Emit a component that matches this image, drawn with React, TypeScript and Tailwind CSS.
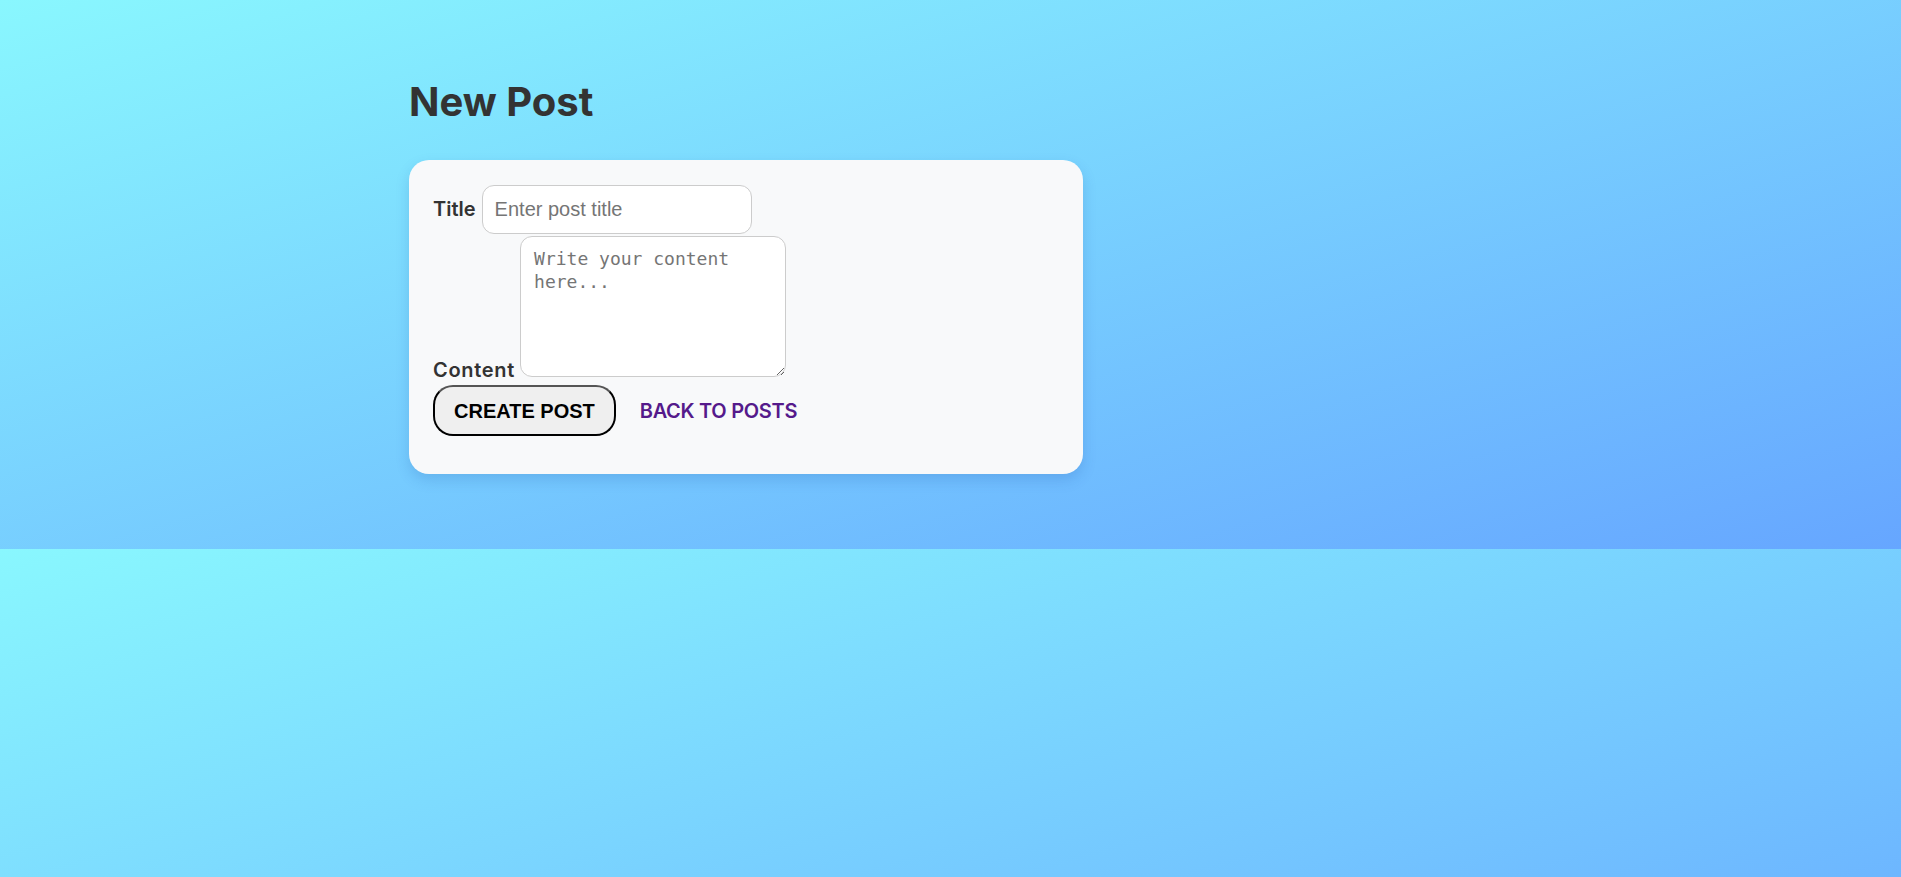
const NewPost = () => {
  return (
    <div className="flex min-h-screen w-full">
      <main className="flex-1 bg-[linear-gradient(to_bottom_right,#89f7fe_0%,#66a6ff_100%)] bg-[length:100%_549px] bg-repeat-y">
        <div className="pl-[409px] pt-[78px]">
          <h1 className="font-['Inter',sans-serif] text-[40px] leading-[48px] font-bold text-[#333]">
            New Post
          </h1>

          <form className="mt-[34px] w-[674px] rounded-[20px] bg-[#f8f9fa] px-6 pt-[25px] pb-[38px] shadow-[0_6px_14px_rgba(30,80,160,0.18)]">
            <div className="flex items-baseline gap-[6px]">
              <label className="font-['Inter',sans-serif] text-[20px] font-semibold text-[#333]">Title</label>
              <input
                type="text"
                placeholder="Enter post title"
                className="h-[49px] w-[270px] rounded-[12px] border border-[#ccc] bg-white px-3 font-['Liberation_Sans',Arial,sans-serif] text-[20px] text-[#333] placeholder:text-[#757575] outline-none"
              />
            </div>

            <div className="mt-[2px] flex items-end gap-[5px]">
              <label className="mb-[-3px] font-['Inter',sans-serif] text-[20px] leading-none font-semibold tracking-[0.7px] text-[#333]">
                Content
              </label>
              <textarea
                placeholder="Write your content here..."
                className="h-[141px] w-[266px] rounded-[12px] border border-[#ccc] bg-white pl-[13px] pr-3 py-[10px] font-['DejaVu_Sans_Mono',monospace] text-[18px] leading-[23px] text-[#333] placeholder:text-[#757575] outline-none"
              />
            </div>

            <div className="mt-[8px] flex items-baseline">
              <button
                type="button"
                className="h-[51px] rounded-[20px] border-2 border-black border-t-[#555] bg-[#efefef] px-[19px] font-['Liberation_Sans',Arial,sans-serif] text-[20px] font-bold text-black"
              >
                CREATE POST
              </button>
              <a href="#" className="ml-[24px] font-['Inter',sans-serif] text-[20px] font-semibold tracking-[-0.3px] text-[#551a8b]">
                BACK TO POSTS
              </a>
            </div>
          </form>
        </div>
      </main>
      <div className="w-[4px] bg-[#fdc0cf]" />
    </div>
  );
};

export default function App() {
  return <NewPost />;
}
